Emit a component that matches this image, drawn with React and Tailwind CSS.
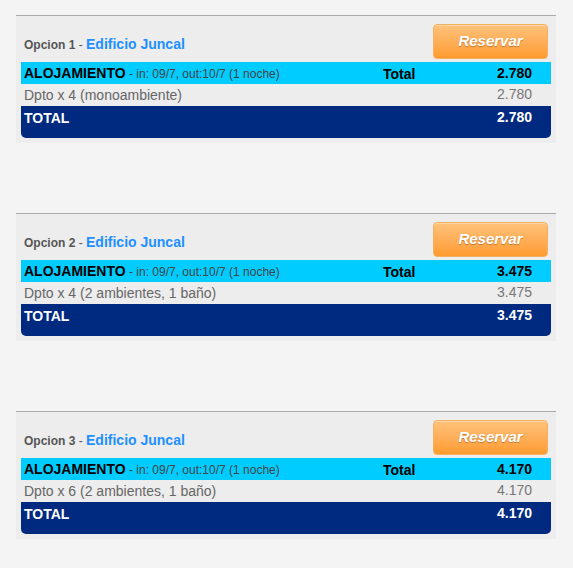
import React from "react";

const data = [
  { n: 1, desc: "Dpto x 4 (monoambiente)", amt: "2.780" },
  { n: 2, desc: "Dpto x 4 (2 ambientes, 1 baño)", amt: "3.475" },
  { n: 3, desc: "Dpto x 6 (2 ambientes, 1 baño)", amt: "4.170" },
];

function Card({ n, desc, amt }) {
  return (
    <div className="ml-[16px] w-[540px] border-t border-[#aaaaaa] bg-[#ededed] px-[5px] pb-[5px]">
      <div className="flex h-[46px] items-start">
        <div className="flex-1 pl-[3px] pt-[20px] leading-[16px]">
          <span className="text-[12px] font-bold text-[#555555]">Opcion {n}</span>
          <span className="text-[12px] text-[#555555]"> - </span>
          <span className="text-[14px] font-bold text-[#1e90ff]">Edificio Juncal</span>
        </div>
        <button className="mr-[3px] mt-[8px] h-[35px] w-[115px] rounded-[4px] border border-[#f3b160] bg-linear-to-b from-[#ffc27a] to-[#ff9b2c] text-[15px] font-bold italic text-white shadow-[inset_0_1px_0_rgba(255,255,255,0.35)] [text-shadow:0_1px_1px_rgba(120,60,0,0.45)]">
          Reservar
        </button>
      </div>
      <div className="flex h-[22px] items-center bg-[#00ccff] text-black">
        <div className="flex-1 pl-[3px] leading-[22px]">
          <span className="text-[14px] font-bold">ALOJAMIENTO</span>
          <span className="text-[12px] text-[#444444]"> - in: 09/7, out:10/7 (1 noche)</span>
        </div>
        <div className="w-[52px] pt-[2px] text-[14px] font-bold leading-[22px]">Total</div>
        <div className="w-[116px] pb-[1px] pr-[19px] text-right text-[14px] font-bold leading-[20px]">{amt}</div>
      </div>
      <div className="flex h-[22px] items-center">
        <div className="flex-1 pl-[3px] text-[14px] leading-[22px] text-[#666666]">{desc}</div>
        <div className="w-[116px] pr-[19px] text-right text-[14px] leading-[20px] text-[#777777] pb-[2px]">{amt}</div>
      </div>
      <div className="flex h-[32px] items-start rounded-b-[5px] bg-[#002a80] text-white">
        <div className="flex-1 pl-[3px] pt-[2px] text-[14px] font-bold leading-[20px]">TOTAL</div>
        <div className="w-[116px] pr-[19px] pt-[1px] text-right text-[14px] font-bold leading-[20px]">{amt}</div>
      </div>
    </div>
  );
}

export default function App() {
  return (
    <div className="min-h-[568px] bg-[#f4f4f4] pt-[15px] font-['Liberation_Sans',Arial,sans-serif]">
      <div className="flex flex-col gap-[70px]">
        {data.map((d) => (
          <Card key={d.n} {...d} />
        ))}
      </div>
    </div>
  );
}
